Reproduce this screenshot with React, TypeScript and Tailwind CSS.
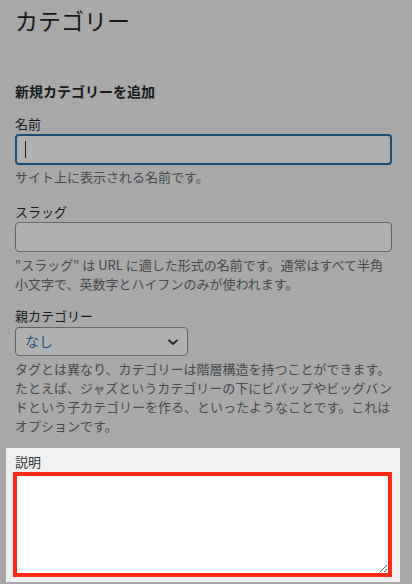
import React from "react";

export default function App() {
  return (
    <div
      className="w-[412px] h-[584px] overflow-hidden bg-[#a8a8a8] text-[#15191b]"
      style={{ fontFamily: '"Noto Sans CJK JP", "Noto Sans", sans-serif' }}
    >
      <div className="pl-[15px] pr-[20px] pt-[4px]">
        <h1 className="text-[23px] leading-[32px] font-normal">カテゴリー</h1>
        <h2 className="mt-[45px] text-[14px] leading-[20px] font-bold">新規カテゴリーを追加</h2>

        <div className="mt-[13px] text-[13px] leading-[20px]">名前</div>
        <div className="h-[31px] rounded-[4px] border-2 border-[#17507c] bg-[#b0b0b0] flex items-center pl-[8px]">
          <span className="block w-[1px] h-[17px] bg-[#15191b]" />
        </div>
        <p className="mt-[2px] text-[13px] leading-[19px] text-[#464a4e]">サイト上に表示される名前です。</p>

        <div className="mt-[16px] text-[13px] leading-[20px]">スラッグ</div>
        <div className="h-[30px] rounded-[4px] border border-[#626466] bg-[#b0b0b0]" />
        <p className="mt-[3px] text-[13px] leading-[19px] text-[#464a4e]">
          "スラッグ" は URL に適した形式の名前です。通常はすべて半角小文字で、英数字とハイフンのみが使われます。
        </p>

        <div className="mt-[13px] text-[13px] leading-[20px]">親カテゴリー</div>
        <div className="mt-[1px] w-[173px] h-[29px] rounded-[4px] border border-[#626466] bg-[#b0b0b0] flex items-center justify-between pl-[9px] pr-[8px]">
          <span className="text-[14px] text-[#184f7c]">なし</span>
          <svg width="12" height="8" viewBox="0 0 12 8" fill="none">
            <path d="M1.5 1.8 L6 6 L10.5 1.8" stroke="#1e2224" strokeWidth="1.8" />
          </svg>
        </div>
        <p className="mt-[3px] text-[13px] leading-[19px] text-[#464a4e]">
          タグとは異なり、カテゴリーは階層構造を持つことができます。たとえば、ジャズというカテゴリーの下にビバップやビッグバンドという子カテゴリーを作る、といったようなことです。これはオプションです。
        </p>

        <div className="mt-[13px] ml-[-9px] mr-[-8px] bg-[#f0f0f0] pl-[7px] pr-[8px] pt-[4px] pb-[5px]">
          <div className="pl-[2px] text-[13px] leading-[20px] text-[#2c3338]">説明</div>
          <textarea className="block w-full h-[105px] border-4 border-[#fe2a16] bg-white outline-none" />
        </div>
      </div>
    </div>
  );
}
